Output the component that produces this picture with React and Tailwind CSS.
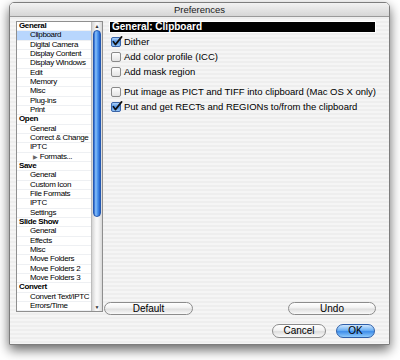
import React from 'react';

const rows = [
  { label: 'General', head: true },
  { label: 'Clipboard', selected: true },
  { label: 'Digital Camera' },
  { label: 'Display Content' },
  { label: 'Display Windows' },
  { label: 'Edit' },
  { label: 'Memory' },
  { label: 'Misc' },
  { label: 'Plug-ins' },
  { label: 'Print' },
  { label: 'Open', head: true },
  { label: 'General' },
  { label: 'Correct & Change' },
  { label: 'IPTC' },
  { label: 'Formats...', folder: true },
  { label: 'Save', head: true },
  { label: 'General' },
  { label: 'Custom Icon' },
  { label: 'File Formats' },
  { label: 'IPTC' },
  { label: 'Settings' },
  { label: 'Slide Show', head: true },
  { label: 'General' },
  { label: 'Effects' },
  { label: 'Misc' },
  { label: 'Move Folders' },
  { label: 'Move Folders 2' },
  { label: 'Move Folders 3' },
  { label: 'Convert', head: true },
  { label: 'Convert Text/IPTC' },
  { label: 'Errors/Time' },
];

const options = [
  { label: 'Dither', on: true },
  { label: 'Add color profile (ICC)', on: false },
  { label: 'Add mask region', on: false },
  { label: 'Put image as PICT and TIFF into clipboard (Mac OS X only)', on: false, gap: true },
  { label: 'Put and get RECTs and REGIONs to/from the clipboard', on: true },
];

// aqua style checkbox, drawn because no icon set has it
function CheckBox({ on }) {
  return (
    <svg width="12" height="11" viewBox="0 0 12 11" className="shrink-0">
      <defs>
        <linearGradient id="cbOn" x1="0" y1="0" x2="0" y2="1">
          <stop offset="0" stopColor="#b9dafb" />
          <stop offset="0.5" stopColor="#4f93e6" />
          <stop offset="1" stopColor="#9bcaf8" />
        </linearGradient>
        <linearGradient id="cbOff" x1="0" y1="0" x2="0" y2="1">
          <stop offset="0" stopColor="#ffffff" />
          <stop offset="1" stopColor="#e2e2e2" />
        </linearGradient>
      </defs>
      <rect
        x="0.5"
        y="1.5"
        width="9"
        height="9"
        rx="1.5"
        fill={on ? 'url(#cbOn)' : 'url(#cbOff)'}
        stroke={on ? '#3a64a8' : '#8a8a8a'}
      />
      {on && (
        <path
          d="M2.4 5.6 L4.4 8.6 L10.6 0.9"
          stroke="#111"
          strokeWidth="1.7"
          fill="none"
          strokeLinecap="round"
          strokeLinejoin="round"
        />
      )}
    </svg>
  );
}

function Scrollbar() {
  return (
    <div className="w-[11px] flex flex-col border-l border-[#bdbdbd] bg-[linear-gradient(90deg,#d4d4d4,#f7f7f7_40%,#f7f7f7_60%,#d9d9d9)]">
      <div className="h-[8px] flex items-center justify-center text-[5px] leading-none text-[#333]">▲</div>
      <div className="h-[187px] mx-[1px] rounded-full border border-[#2458b0] bg-[linear-gradient(90deg,#1f5fcc,#8cc2fa_30%,#559cf0_55%,#2f74dc_85%,#1f58bc)]" />
      <div className="flex-1" />
      <div className="h-[8px] flex items-center justify-center text-[5px] leading-none text-[#333]">▼</div>
    </div>
  );
}

function AquaButton({ children, width, primary }) {
  const look = primary
    ? 'border-[#2f5fa8] bg-[linear-gradient(180deg,#cfe6fd,#6cb0f4_45%,#3f8eea_55%,#8fcbfb)]'
    : 'border-[#8c8c8c] bg-[linear-gradient(180deg,#ffffff,#f1f1f1_45%,#dedede_55%,#fafafa)]';
  return (
    <div className={`${width} h-full rounded-full border ${look} flex items-center justify-center text-[10px] text-black leading-none`}>
      {children}
    </div>
  );
}

export default function App() {
  return (
    <div className="w-[400px] h-[360px] bg-white pt-[2px] pl-[9px] font-['Liberation_Sans',Arial,sans-serif]">
      <div className="w-[381px] h-[343px] rounded-t-[5px] border border-[#7d7d7d] flex flex-col shadow-[0_5px_12px_rgba(0,0,0,0.6)] overflow-hidden">
        {/* title bar */}
        <div className="h-[14px] shrink-0 flex items-center justify-center border-b border-[#9a9a9a] bg-[linear-gradient(180deg,#f2f2f2,#d6d6d6)] text-[9.5px] text-[#1a1a1a] leading-none">
          Preferences
        </div>

        {/* body */}
        <div className="flex-1 flex flex-col pt-[4px] pl-[6px] bg-[repeating-linear-gradient(180deg,#eeeeee_0_2px,#f5f5f5_2px_4px)]">
          <div className="flex gap-[1px] h-[294px]">
            {/* category list */}
            <div className="h-[291px] w-[87px] flex border border-[#8f8f8f] bg-white">
              <div className="flex-1 flex flex-col">
                {rows.map((r, i) => (
                  <div
                    key={i}
                    className={`flex-1 flex items-center border-b border-[#eef0f3] text-[8px] leading-none tracking-[-0.35px] text-black whitespace-nowrap ${
                      r.selected ? 'bg-[#b8d6fd]' : ''
                    } ${r.head ? 'pl-[2px] font-bold' : r.folder ? 'pl-[16px]' : 'pl-[13px]'}`}
                  >
                    {r.folder && <span className="text-[6px] text-[#666] mr-[2px]">▶</span>}
                    {r.label}
                  </div>
                ))}
              </div>
              <Scrollbar />
            </div>

            {/* settings panel */}
            <div className="w-[273px] flex flex-col">
              <div className="ml-[5px] mr-[1px] h-[12px] border border-white bg-black flex items-center pl-[2px] text-[10px] font-bold text-white leading-none">
                General: Clipboard
              </div>
              <div className="flex flex-col mt-[1px] pl-[7px]">
                {options.map((o, i) => (
                  <div key={i} className={`h-[15px] flex items-center gap-[1px] ${o.gap ? 'mt-[5px]' : ''}`}>
                    <CheckBox on={o.on} />
                    <span className="text-[9.5px] text-black leading-none whitespace-nowrap">{o.label}</span>
                  </div>
                ))}
              </div>
              <div className="flex-1" />
              <div className="h-[13px] flex justify-between mr-[1px]">
                <AquaButton width="w-[89px]">Default</AquaButton>
                <AquaButton width="w-[88px]">Undo</AquaButton>
              </div>
            </div>
          </div>

          <div className="w-[361px] h-[14px] mt-[9px] flex justify-end gap-[10px] pr-[2px]">
            <AquaButton width="w-[54px]">Cancel</AquaButton>
            <AquaButton width="w-[39px]" primary>
              OK
            </AquaButton>
          </div>
        </div>
      </div>
    </div>
  );
}
